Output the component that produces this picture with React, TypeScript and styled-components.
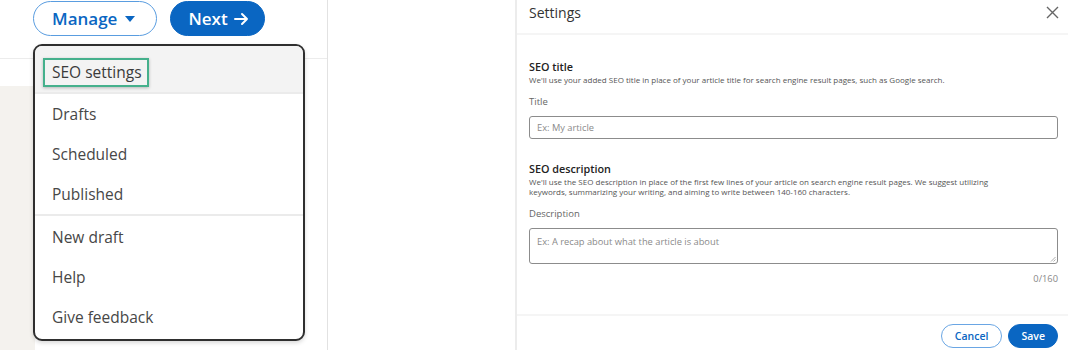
import React from 'react';
import styled, {createGlobalStyle} from 'styled-components';

const GlobalStyle = createGlobalStyle`
  html, body {
    margin: 0;
    padding: 0;
    background: #fff;
  }

  body {
    font-family: "Open Sans", "Noto Sans", sans-serif;
    width: 1068px;
    height: 350px;
    overflow: hidden;
  }
`

const Page = styled.div`
  display: flex;
  width: 1068px;
  height: 350px;
`

const EditorPane = styled.div`
  position: relative;
  width: 327px;
  flex-shrink: 0;
  display: flex;
  flex-direction: column;
  border-right: 1px solid #e2e2e2;
`

const TopBar = styled.div`
  height: 59px;
  box-sizing: border-box;
  border-bottom: 1px solid #ececec;
  display: flex;
  align-items: flex-start;
  gap: 13px;
  padding: 1px 0 0 33px;
`

const PillButton = styled.button<{ $primary?: boolean }>`
  display: flex;
  align-items: center;
  gap: ${({$primary}) => ($primary ? '6px' : '7px')};
  height: 35px;
  box-sizing: border-box;
  padding: ${({$primary}) => ($primary ? '0 15px 0 17px' : '0 20px 0 18px')};
  border-radius: 18px;
  border: ${({$primary}) => ($primary ? '1px solid #0a66c2' : '1.5px solid #5a9de0')};
  background: ${({$primary}) => ($primary ? '#0a66c2' : '#fff')};
  color: ${({$primary}) => ($primary ? '#fff' : '#0a66c2')};
  font-family: "Open Sans", sans-serif;
  font-size: 17px;
  font-weight: 600;
  cursor: pointer;
`

const EditorBody = styled.div`
  flex: 1;
  display: flex;
  padding-top: 27px;
`

const Gutter = styled.div`
  width: 35px;
  background: #f4f2ee;
`

const Menu = styled.div`
  position: absolute;
  top: 44px;
  left: 33px;
  width: 272px;
  height: 297px;
  box-sizing: border-box;
  border: 2px solid #2f2f2f;
  border-radius: 9px;
  background: #fff;
  overflow: hidden;
  box-shadow: 0 2px 4px rgba(0, 0, 0, 0.15);
`

const MenuSection = styled.div<{ $last?: boolean }>`
  border-bottom: ${({$last}) => ($last ? 'none' : '2px solid #ebebeb')};
  padding-top: ${({$last}) => ($last ? '1px' : '0')};
`

const MenuItem = styled.div<{ $active?: boolean }>`
  height: ${({$active}) => ($active ? '46px' : '40px')};
  box-sizing: border-box;
  display: flex;
  align-items: center;
  padding: ${({$active}) => ($active ? '7px 0 0 17px' : '0 0 0 17px')};
  background: ${({$active}) => ($active ? '#f3f3f3' : 'transparent')};
  color: #474747;
  font-size: 15.5px;
  font-weight: 500;
`

const Highlight = styled.span`
  margin-left: -9px;
  padding: 1px 5px 2px 7px;
  border: 2px solid #45b08c;
  box-shadow: 0 1px 3px rgba(0, 0, 0, 0.25);
  color: #3a3a3a;
`

const Gap = styled.div`
  flex: 1;
`

const Modal = styled.div`
  width: 551px;
  flex-shrink: 0;
  display: flex;
  flex-direction: column;
  border-left: 2px solid #ececec;
`

const ModalHeader = styled.div`
  height: 35px;
  box-sizing: border-box;
  display: flex;
  align-items: center;
  justify-content: space-between;
  padding: 0 9px 8px 12px;
  border-bottom: 2px solid #f5f5f5;
`

const ModalTitle = styled.div`
  font-size: 14px;
  color: #333;
`

const CloseButton = styled.div`
  display: flex;
  width: 13px;
  height: 13px;
`

const ModalBody = styled.div`
  flex: 1;
  padding: 25px 10px 0 12px;
  border-bottom: 2px solid #f5f5f5;
`

const SectionTitle = styled.div`
  font-size: 10.8px;
  font-weight: 600;
  color: #222;
  line-height: 14px;
`

const Hint = styled.div`
  margin-top: 1px;
  max-width: 475px;
  font-size: 8px;
  color: #555;
  line-height: 10px;
`

const FieldLabel = styled.div`
  margin-top: 11px;
  font-size: 9.5px;
  color: #666;
  line-height: 12px;
`

const Field = styled.div<{ $tall?: boolean }>`
  position: relative;
  margin-top: 8px;
  height: ${({$tall}) => ($tall ? '36px' : '23px')};
  box-sizing: border-box;
  border: 1px solid #8c8c8c;
  border-radius: 3px;
  padding: ${({$tall}) => ($tall ? '6px 7px' : '0 7px')};
  display: flex;
  align-items: ${({$tall}) => ($tall ? 'flex-start' : 'center')};
  font-size: 9.3px;
  color: #8a8a8a;
`

const Grip = styled.svg`
  position: absolute;
  right: 1px;
  bottom: 1px;
`

const Counter = styled.div`
  margin-top: 9px;
  text-align: right;
  font-size: 9.3px;
  line-height: 12px;
  color: #888;
`

const Spacer = styled.div<{ $h: number }>`
  height: ${({$h}) => $h}px;
`

const ModalFooter = styled.div`
  height: 34px;
  box-sizing: border-box;
  display: flex;
  justify-content: flex-end;
  align-items: flex-start;
  gap: 6px;
  padding: 8px 10px 0 0;
`

const SmallPill = styled.button<{ $primary?: boolean }>`
  height: 24px;
  box-sizing: border-box;
  padding: 0 ${({$primary}) => ($primary ? '12px' : '13px')};
  border-radius: 12px;
  border: 1px solid ${({$primary}) => ($primary ? '#0a66c2' : '#6aa6e4')};
  background: ${({$primary}) => ($primary ? '#0a66c2' : '#fff')};
  color: ${({$primary}) => ($primary ? '#fff' : '#0a66c2')};
  font-family: "Open Sans", sans-serif;
  font-size: 10.5px;
  font-weight: 600;
`

const menuItems = [['Drafts', 'Scheduled', 'Published'], ['New draft', 'Help', 'Give feedback']];

export default function App() {
    return (
        <>
            <GlobalStyle/>
            <Page>
                <EditorPane>
                    <TopBar>
                        <PillButton>
                            Manage
                            <svg width="12" height="8" viewBox="0 0 12 8">
                                <path d="M1 1h10L6 7z" fill="#0a66c2"/>
                            </svg>
                        </PillButton>
                        <PillButton $primary>
                            Next
                            <svg width="15" height="14" viewBox="0 0 15 14" fill="none" stroke="#fff"
                                 strokeWidth="2" strokeLinecap="round" strokeLinejoin="round">
                                <path d="M1 7h12M8 2l5 5-5 5"/>
                            </svg>
                        </PillButton>
                    </TopBar>
                    <EditorBody>
                        <Gutter/>
                    </EditorBody>
                    <Menu>
                        <MenuSection>
                            <MenuItem $active>
                                <Highlight>SEO settings</Highlight>
                            </MenuItem>
                        </MenuSection>
                        {menuItems.map((group, i) => (
                            <MenuSection key={i} $last={i === menuItems.length - 1}>
                                {group.map(label => <MenuItem key={label}>{label}</MenuItem>)}
                            </MenuSection>
                        ))}
                    </Menu>
                </EditorPane>
                <Gap/>
                <Modal>
                    <ModalHeader>
                        <ModalTitle>Settings</ModalTitle>
                        <CloseButton>
                            <svg width="13" height="13" viewBox="0 0 13 13" stroke="#666" strokeWidth="1.4">
                                <path d="M1 1l11 11M12 1L1 12"/>
                            </svg>
                        </CloseButton>
                    </ModalHeader>
                    <ModalBody>
                        <SectionTitle>SEO title</SectionTitle>
                        <Hint>We'll use your added SEO title in place of your article title for search engine result
                            pages, such as Google search.</Hint>
                        <FieldLabel>Title</FieldLabel>
                        <Field>Ex: My article</Field>
                        <Spacer $h={23}/>
                        <SectionTitle>SEO description</SectionTitle>
                        <Hint>We'll use the SEO description in place of the first few lines of your article on search
                            engine result pages. We suggest utilizing keywords, summarizing your writing, and aiming to
                            write between 140-160 characters.</Hint>
                        <FieldLabel>Description</FieldLabel>
                        <Field $tall>
                            Ex: A recap about what the article is about
                            <Grip width="6" height="6" viewBox="0 0 6 6" stroke="#999" strokeWidth="0.8">
                                <path d="M5.5 1L1 5.5M5.5 3.5L3.5 5.5"/>
                            </Grip>
                        </Field>
                        <Counter>0/160</Counter>
                    </ModalBody>
                    <ModalFooter>
                        <SmallPill>Cancel</SmallPill>
                        <SmallPill $primary>Save</SmallPill>
                    </ModalFooter>
                </Modal>
            </Page>
        </>
    );
}
